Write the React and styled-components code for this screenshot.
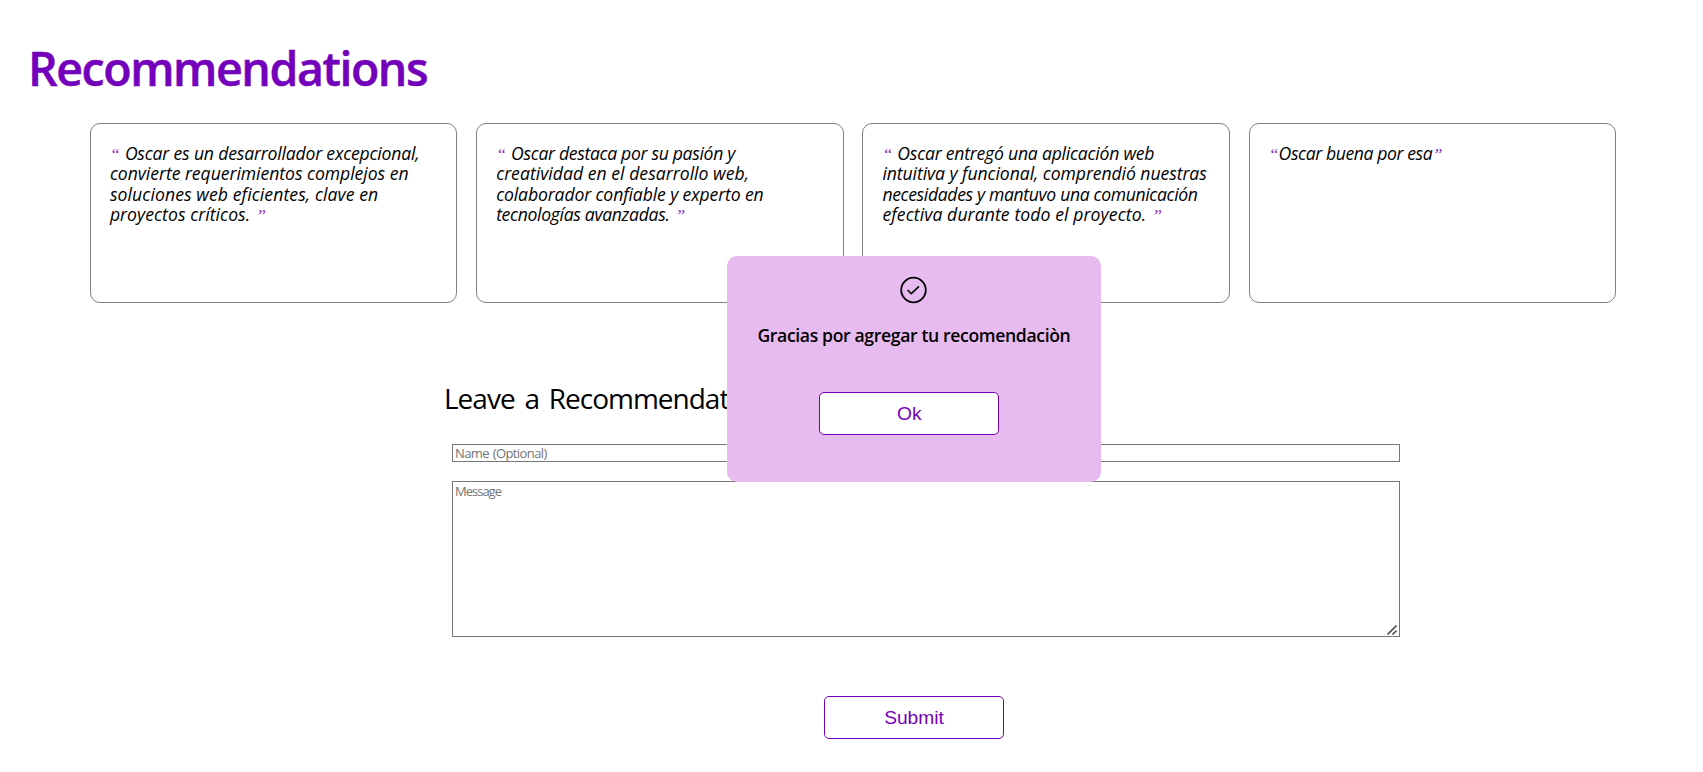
import React from "react";
import styled, { createGlobalStyle } from "styled-components";

const GlobalStyle = createGlobalStyle`
  * { box-sizing: border-box; }
  body {
    margin: 0;
    background: #fff;
    color: #000;
    font-family: "Trebuchet MS", "Open Sans", sans-serif;
    overflow: hidden;
  }
`;

const Page = styled.main`
  position: relative;
  height: 772px;
  padding: 40px 0 0;
`;

const Title = styled.h1`
  margin: 0 0 27px 28px;
  font-size: 46.5px;
  line-height: 56px;
  font-weight: 600;
  letter-spacing: -1.45px;
  color: #7300bb;
  -webkit-text-stroke: 0.5px #7300bb;
`;

const Cards = styled.section`
  display: grid;
  grid-template-columns: repeat(4, 1fr);
  gap: 18.85px;
  width: 1526.15px;
  margin-left: 89.9px;
`;

const Card = styled.article`
  height: 180px;
  padding: 18.6px 0 0 19px;
  border: 1px solid #808080;
  border-radius: 10px;
  font-size: 17.6px;
  line-height: 20.6px;
  font-style: italic;
`;

const Line = styled.div`
  white-space: pre;
  letter-spacing: ${({ $spacing }) => $spacing}px;
`;

const Quote = styled.span`
  margin: 0 ${({ $after }) => $after}px 0 ${({ $before }) => $before}px;
  font-family: "Liberation Serif", serif;
  line-height: 1;
  letter-spacing: 0;
  color: #8a2cc6;
`;

const Form = styled.form`
  display: flex;
  flex-direction: column;
  width: 948px;
  margin: 77px 0 0 452px;
`;

const FormTitle = styled.h2`
  margin: 0 0 28px -8px;
  font-size: 28px;
  line-height: 36px;
  font-weight: 400;
  letter-spacing: -1px;
  word-spacing: 3.5px;
`;

const fieldFont = `
  border: 1px solid #767676;
  border-radius: 0;
  background: #fff;
  font-family: "Trebuchet MS", "Open Sans", sans-serif;
  font-size: 13px;
  &::placeholder { color: #757575; }
`;

const NameInput = styled.input`
  ${fieldFont}
  height: 18px;
  margin: 0 0 19px;
  padding: 0 2px;
  letter-spacing: -0.6px;
  word-spacing: 1px;
`;

const MessageField = styled.div`
  position: relative;
  height: 156px;
  margin: 0 0 59px;
`;

const MessageInput = styled.textarea`
  ${fieldFont}
  display: block;
  width: 100%;
  height: 156px;
  padding: 1px 2px;
  line-height: 16px;
  letter-spacing: -1px;
  resize: none;
`;

const ResizeGrip = styled.svg`
  position: absolute;
  right: 3px;
  bottom: 2px;
  width: 10px;
  height: 10px;
  pointer-events: none;
`;

const Button = styled.button`
  width: 180px;
  height: 43px;
  padding: 0;
  border: 1px solid #7300bb;
  border-radius: 5px;
  background: #fff;
  color: #7300bb;
  font-family: Arial, "Liberation Sans", sans-serif;
  font-size: 19.2px;
`;

const SubmitButton = styled(Button)`
  margin-left: 372px;
`;

const Modal = styled.div`
  position: absolute;
  top: 256px;
  left: 726.6px;
  width: 374.7px;
  height: 226px;
  padding-top: 18px;
  display: flex;
  flex-direction: column;
  align-items: center;
  border-radius: 10px;
  background: #e8bbf0;
`;

const ModalText = styled.p`
  margin: 16.5px 0 45.5px;
  font-size: 17.6px;
  line-height: 24px;
  font-weight: 600;
  letter-spacing: -0.36px;
  white-space: nowrap;
`;

const OkButton = styled(Button)`
  margin-right: 9.4px;
`;

const testimonials = [
  {
    spaced: true,
    lines: [
      ["Oscar es un desarrollador excepcional,", -0.18],
      ["convierte requerimientos complejos en", -0.04],
      ["soluciones web eficientes, clave en", 0.09],
      ["proyectos críticos.", 0.06],
    ],
  },
  {
    spaced: true,
    lines: [
      ["Oscar destaca por su pasión y", -0.32],
      ["creatividad en el desarrollo web,", 0.03],
      ["colaborador confiable y experto en", -0.12],
      ["tecnologías avanzadas.", -0.33],
    ],
  },
  {
    spaced: true,
    lines: [
      ["Oscar entregó una aplicación web", -0.22],
      ["intuitiva y funcional, comprendió nuestras", -0.07],
      ["necesidades y mantuvo una comunicación", -0.35],
      ["efectiva durante todo el proyecto.", 0.1],
    ],
  },
  { spaced: false, lines: [["Oscar buena por esa", -0.4]] },
];

function Testimonial({ lines, spaced }) {
  return (
    <Card>
      {lines.map(([text, spacing], i) => (
        <Line key={text} $spacing={spacing}>
          {i === 0 && <Quote $before={0} $after={spaced ? 5.2 : 0.2}>“</Quote>}
          {text}
          {i === lines.length - 1 && <Quote $before={spaced ? 6 : 0.5} $after={0}>”</Quote>}
        </Line>
      ))}
    </Card>
  );
}

function CheckCircleIcon() {
  return (
    <svg width="32" height="32" viewBox="0 0 32 32" fill="none" stroke="#000" aria-hidden="true">
      <circle cx="15.5" cy="16" r="12.3" strokeWidth="1.8" />
      <path d="M9.6 16 13.3 19.7 21 12.3" strokeWidth="1.6" />
    </svg>
  );
}

export default function App() {
  return (
    <Page>
      <GlobalStyle />
      <Title>Recommendations</Title>
      <Cards>
        {testimonials.map((t) => (
          <Testimonial key={t.lines[0][0]} {...t} />
        ))}
      </Cards>
      <Form onSubmit={(e) => e.preventDefault()}>
        <FormTitle>Leave a Recommendation</FormTitle>
        <NameInput placeholder="Name (Optional)" />
        <MessageField>
          <MessageInput placeholder="Message" />
          <ResizeGrip viewBox="0 0 10 10" stroke="#555" strokeWidth="1.7">
            <path d="M0.5 9.5 9.5 0.5M5.5 9.5 9.5 5.5" />
          </ResizeGrip>
        </MessageField>
        <SubmitButton type="submit">Submit</SubmitButton>
      </Form>
      <Modal role="dialog">
        <CheckCircleIcon />
        <ModalText>Gracias por agregar tu recomendaciòn</ModalText>
        <OkButton type="button">Ok</OkButton>
      </Modal>
    </Page>
  );
}
